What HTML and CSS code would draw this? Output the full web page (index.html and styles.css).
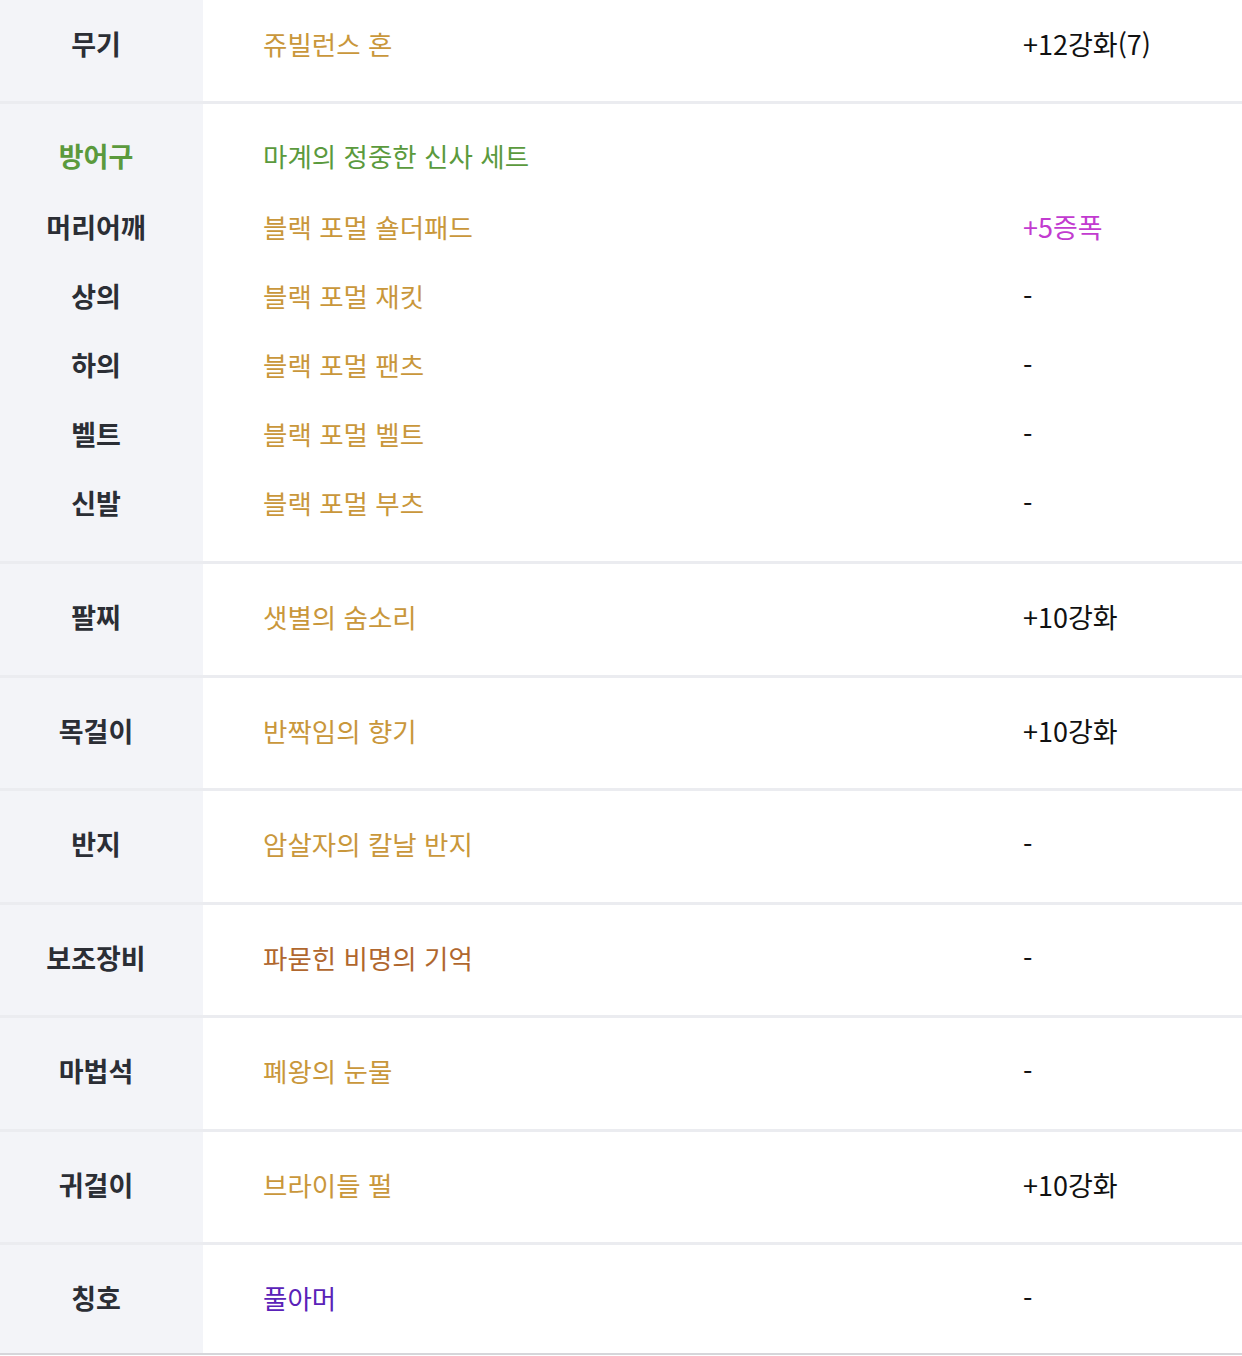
FILE: index.html
```html
<!DOCTYPE html>
<html lang="ko">
<head>
<meta charset="utf-8">
<title>장비</title>
<link rel="stylesheet" href="styles.css">
</head>
<body>
<div class="equip">
  <section class="group">
    <div class="row"><div class="label">무기</div><div class="item gold">쥬빌런스 혼</div><div class="extra">+12강화(7)</div></div>
  </section>
  <section class="group armor">
    <div class="row head"><div class="label green">방어구</div><div class="item green">마계의 정중한 신사 세트</div><div class="extra"></div></div>
    <div class="row"><div class="label">머리어깨</div><div class="item gold">블랙 포멀 숄더패드</div><div class="extra magenta">+5증폭</div></div>
    <div class="row"><div class="label">상의</div><div class="item gold">블랙 포멀 재킷</div><div class="extra">-</div></div>
    <div class="row"><div class="label">하의</div><div class="item gold">블랙 포멀 팬츠</div><div class="extra">-</div></div>
    <div class="row"><div class="label">벨트</div><div class="item gold">블랙 포멀 벨트</div><div class="extra">-</div></div>
    <div class="row"><div class="label">신발</div><div class="item gold">블랙 포멀 부츠</div><div class="extra">-</div></div>
  </section>
  <section class="group">
    <div class="row"><div class="label">팔찌</div><div class="item gold">샛별의 숨소리</div><div class="extra">+10강화</div></div>
  </section>
  <section class="group">
    <div class="row"><div class="label">목걸이</div><div class="item gold">반짝임의 향기</div><div class="extra">+10강화</div></div>
  </section>
  <section class="group">
    <div class="row"><div class="label">반지</div><div class="item gold">암살자의 칼날 반지</div><div class="extra">-</div></div>
  </section>
  <section class="group">
    <div class="row"><div class="label">보조장비</div><div class="item brown">파묻힌 비명의 기억</div><div class="extra">-</div></div>
  </section>
  <section class="group">
    <div class="row"><div class="label">마법석</div><div class="item gold">폐왕의 눈물</div><div class="extra">-</div></div>
  </section>
  <section class="group">
    <div class="row"><div class="label">귀걸이</div><div class="item gold">브라이들 펄</div><div class="extra">+10강화</div></div>
  </section>
  <section class="group last">
    <div class="row"><div class="label">칭호</div><div class="item purple">풀아머</div><div class="extra">-</div></div>
  </section>
</div>
</body>
</html>
```
FILE: styles.css
```css
html, body {
  margin: 0;
  padding: 0;
  background: #fff;
}
body {
  font-family: "Noto Sans CJK KR", "Noto Sans", sans-serif;
  overflow: hidden;
}
.equip {
  margin-top: -9.5px;
}
.group {
  padding: 18.25px 0 23.25px;
  border-bottom: 3px solid #ebecf0;
  background: linear-gradient(to right, #f3f4f8 203px, #fff 203px);
}
.group.armor {
  padding: 17px 0 24px;
}
.group.last {
  padding-bottom: 21px;
  border-bottom: 2px solid #d6d6da;
}
.row {
  display: grid;
  grid-template-columns: 203px 820px 1fr;
  height: 69px;
  align-items: center;
  font-size: 26.5px;
}
.row.head {
  margin-bottom: 2px;
}
.label {
  text-align: center;
  padding-right: 11px;
  font-weight: 700;
  font-size: 27px;
  color: #2b2e35;
}
.item {
  padding-left: 60px;
  color: #c9973b;
}
.extra {
  color: #111;
  font-size: 27px;
}
.gold { color: #c9973b; }
.green { color: #5b9a3d; }
.brown { color: #b0672e; }
.purple { color: #5a22b8; }
.magenta { color: #c23bd0; }
```
